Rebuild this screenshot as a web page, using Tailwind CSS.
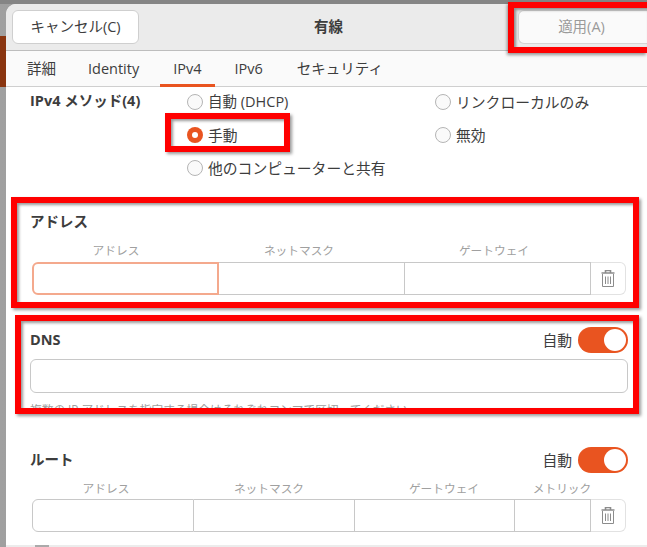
<!DOCTYPE html>
<html lang="ja">
<head>
  <meta charset="UTF-8" />
  <title>有線</title>
  <script src="https://cdn.jsdelivr.net/npm/@tailwindcss/browser@4"></script>
</head>
<body class="w-[647px] h-[547px] overflow-hidden bg-linear-to-r from-[#a0a0a0] to-[#808080] font-['Open_Sans','Noto_Sans_CJK_JP',sans-serif] text-[14.5px] text-[#3d3d3d]">
  <div class="relative w-[647px] h-[547px] overflow-hidden pl-[6px] pt-[4px]">
    <!-- desktop showing behind the window -->
    <div class="absolute left-0 top-0 w-[647px] h-[4px] bg-[#858585]"></div>
    <div class="absolute left-0 top-[36px] w-[6px] h-[51px] bg-[#8a3510]"></div>

    <div class="relative h-[543px] w-[641px] bg-white rounded-tl-[10px] overflow-hidden flex flex-col">

      <!-- header -->
      <div class="h-[47px] shrink-0 bg-[#ebebeb] border-b border-[#bdbdbd] flex items-center pl-[6px]">
        <button class="w-[127px] h-[34px] bg-white border border-[#cfcfcf] rounded-md">キャンセル(C)</button>
        <div class="flex-1 text-center font-bold">有線</div>
        <button class="w-[129px] h-[34px] pr-[3px] bg-[#fafafa] border border-r-0 border-[#d5d5d5] rounded-l-md text-[#9a9a9a]">適用(A)</button>
      </div>

      <!-- tabs -->
      <div class="h-[36px] shrink-0 bg-[#fafafa] border-b border-[#cfcfcf] flex pl-[8px]">
        <div class="px-[13px] pt-[7px]">詳細</div>
        <div class="ml-[6px] px-[13px] pt-[7px]">Identity</div>
        <div class="ml-[8px] px-[13px] pt-[7px] border-b-[3px] border-[#e95420] h-[36px]">IPv4</div>
        <div class="ml-[7px] px-[13px] pt-[7px]">IPv6</div>
        <div class="ml-[8px] px-[13px] pt-[7px]">セキュリティ</div>
      </div>

      <!-- method -->
      <div class="h-[123px] shrink-0 flex pl-[24px] pt-[3px] text-[14.8px]">
        <div class="w-[157px] font-bold text-[14.5px] leading-[22px]">IPv4 メソッド(4)</div>
        <div class="w-[248px] flex flex-col gap-[9px]">
          <label class="flex items-center gap-[5px] h-[24px]"><span class="w-[16px] h-[16px] rounded-full border border-[#b5b5b5] bg-[#fafafa]"></span><span class="text-[14.5px]">自動 (DHCP)</span></label>
          <label class="flex items-center gap-[5px] h-[24px]"><span class="w-[16px] h-[16px] rounded-full bg-[#e95420] flex items-center justify-center"><span class="w-[6px] h-[6px] rounded-full bg-white"></span></span>手動</label>
          <label class="flex items-center gap-[5px] h-[24px]"><span class="w-[16px] h-[16px] rounded-full border border-[#b5b5b5] bg-[#fafafa]"></span>他のコンピューターと共有</label>
        </div>
        <div class="flex flex-col gap-[9px]">
          <label class="flex items-center gap-[5px] h-[24px]"><span class="w-[16px] h-[16px] rounded-full border border-[#b5b5b5] bg-[#fafafa]"></span>リンクローカルのみ</label>
          <label class="flex items-center gap-[5px] h-[24px]"><span class="w-[16px] h-[16px] rounded-full border border-[#b5b5b5] bg-[#fafafa]"></span>無効</label>
        </div>
      </div>

      <!-- addresses -->
      <div class="pl-[24px] pr-[19px] shrink-0">
        <div class="font-bold h-[24px] leading-[24px]">アドレス</div>
        <div class="flex text-[11.7px] text-[#a0a0a0] h-[22px] mt-[6px] ml-[2px] leading-[20px] text-center">
          <div class="w-[168px]">アドレス</div><div class="w-[198px]">ネットマスク</div><div class="w-[192px]">ゲートウェイ</div>
        </div>
        <div class="flex h-[33px] ml-[2px]">
          <div class="w-[187px] border-2 border-[#f4a98d] rounded-l-md"></div>
          <div class="w-[186px] border-y border-r border-[#c8c8c8]"></div>
          <div class="w-[186px] border-y border-r border-[#c8c8c8]"></div>
          <div class="w-[35px] border-y border-r border-[#e2e2e2] rounded-r-md flex items-center justify-center">
            <svg width="14" height="17" viewBox="0 0 14 17" fill="none" stroke="#8c8c8c" stroke-width="1"><path d="M4.5 2.5v-2h5v2M.5 3h13" stroke-width="1.6"/><path d="M1.5 4v12.5h11V4M4.5 6.5v7.5M7 6.5v7.5M9.5 6.5v7.5"/></svg>
          </div>
        </div>
      </div>

      <!-- dns -->
      <div class="pl-[24px] pr-[19px] shrink-0 mt-[32px]">
        <div class="flex items-center h-[26px]">
          <div class="font-bold flex-1">DNS</div>
          <span class="mr-[6px] text-[14.8px]">自動</span>
          <div class="w-[50px] h-[26px] rounded-full bg-[#e95420] flex justify-end items-center pr-[2px]"><span class="w-[22px] h-[22px] rounded-full bg-white"></span></div>
        </div>
        <div class="h-[34px] mt-[6px] border border-[#c8c8c8] rounded-md"></div>
      </div>
      <div class="h-[15px] mt-[6px] pl-[24px] overflow-hidden text-[11.7px] text-[#a0a0a0] leading-[20px] shrink-0">複数の IP アドレスを指定する場合はそれぞれコンマで区切ってください</div>

      <!-- routes -->
      <div class="pl-[24px] pr-[19px] shrink-0 mt-[33px]">
        <div class="flex items-center h-[26px]">
          <div class="font-bold flex-1">ルート</div>
          <span class="mr-[6px] text-[14.8px]">自動</span>
          <div class="w-[50px] h-[26px] rounded-full bg-[#e95420] flex justify-end items-center pr-[2px]"><span class="w-[22px] h-[22px] rounded-full bg-white"></span></div>
        </div>
        <div class="flex text-[11.7px] text-[#a0a0a0] h-[21px] mt-[5px] ml-[2px] leading-[20px] text-center">
          <div class="w-[148px]">アドレス</div><div class="w-[178px]">ネットマスク</div><div class="w-[172px]">ゲートウェイ</div><div class="w-[64px]">メトリック</div>
        </div>
        <div class="flex h-[33px] ml-[2px]">
          <div class="w-[162px] border border-[#c8c8c8] rounded-l-md"></div>
          <div class="w-[161px] border-y border-r border-[#c8c8c8]"></div>
          <div class="w-[160px] border-y border-r border-[#c8c8c8]"></div>
          <div class="w-[76px] border-y border-r border-[#c8c8c8]"></div>
          <div class="w-[35px] border-y border-r border-[#e2e2e2] rounded-r-md flex items-center justify-center">
            <svg width="14" height="17" viewBox="0 0 14 17" fill="none" stroke="#8c8c8c" stroke-width="1"><path d="M4.5 2.5v-2h5v2M.5 3h13" stroke-width="1.6"/><path d="M1.5 4v12.5h11V4M4.5 6.5v7.5M7 6.5v7.5M9.5 6.5v7.5"/></svg>
          </div>
        </div>
      </div>

      <!-- next row just showing at the bottom -->
      <div class="mt-auto h-[2px] shrink-0 bg-[#ececec]"><div class="ml-[29px] w-[14px] h-[2px] bg-[#aaaaaa]"></div></div>
    </div>

    <!-- red annotation boxes drawn over the screenshot -->
    <div class="absolute left-[508px] top-[2px] w-[139px] h-[51px] border-[6px] border-r-0 border-[#ff0000] shadow-[-1px_2px_3px_rgba(0,0,0,0.4),inset_2px_2px_3px_rgba(0,0,0,0.4)]"></div>
    <div class="absolute left-[165px] top-[113px] w-[125px] h-[39px] border-[6px] border-[#ff0000] shadow-[2px_2px_3px_rgba(0,0,0,0.4),inset_2px_2px_3px_rgba(0,0,0,0.4)]"></div>
    <div class="absolute left-[11px] top-[197px] w-[628px] h-[111px] border-[6px] border-[#ff0000] shadow-[2px_2px_3px_rgba(0,0,0,0.4),inset_2px_2px_3px_rgba(0,0,0,0.4)]"></div>
    <div class="absolute left-[15px] top-[315px] w-[624px] h-[99px] border-[6px] border-[#ff0000] shadow-[2px_2px_3px_rgba(0,0,0,0.4),inset_2px_2px_3px_rgba(0,0,0,0.4)]"></div>
  </div>
</body>
</html>
